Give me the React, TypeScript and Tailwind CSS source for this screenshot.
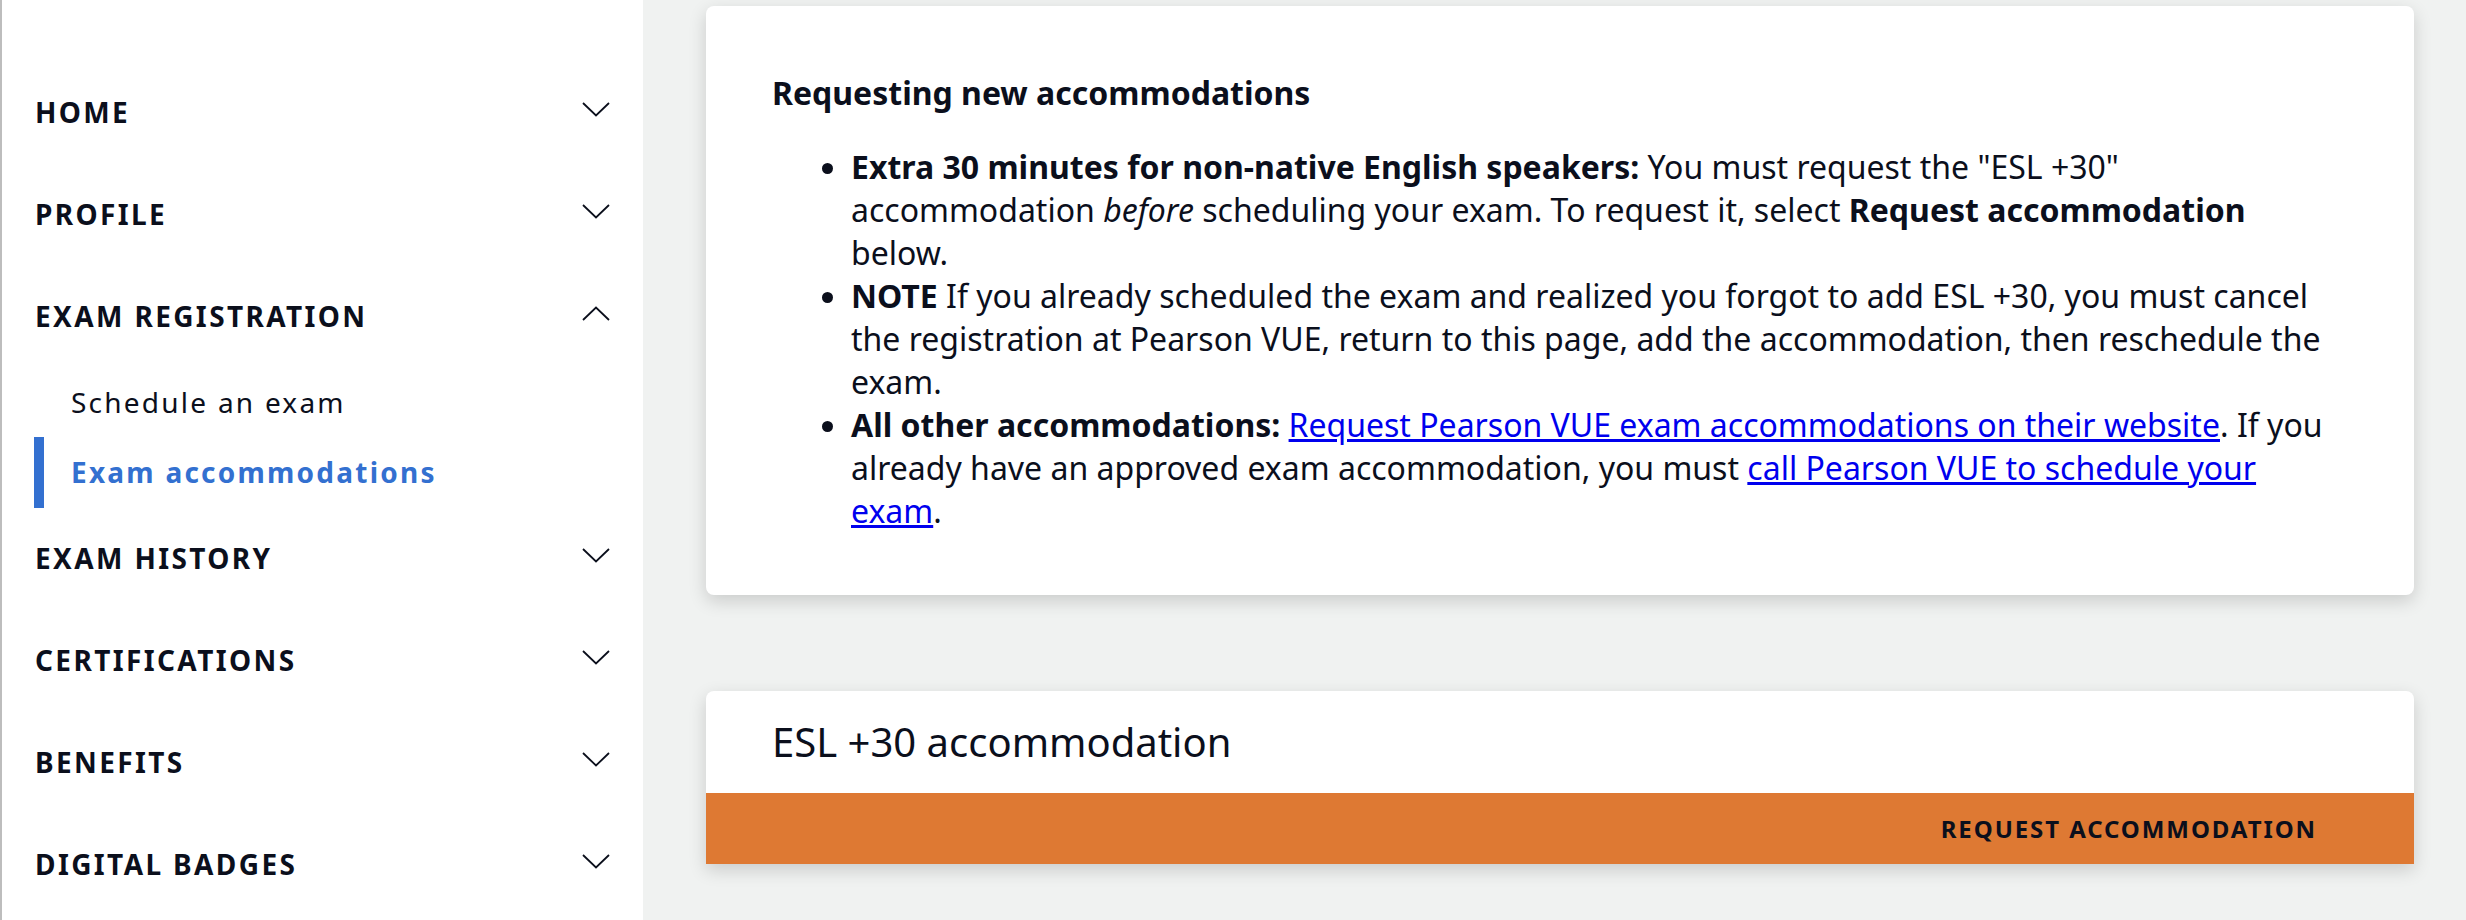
import React from "react";

const font = { fontFamily: '"Noto Sans", "Open Sans", sans-serif' };

function Chevron({ up = false }: { up?: boolean }) {
  return (
    <svg width="28" height="15" viewBox="0 0 28 15" fill="none" className="mb-[6px] shrink-0">
      <polyline
        points={up ? "1,14 14,1.5 27,14" : "1,1 14,13.5 27,1"}
        stroke="#0b0f1c"
        strokeWidth="1.8"
        strokeLinejoin="miter"
      />
    </svg>
  );
}

function NavItem({ label, up = false }: { label: string; up?: boolean }) {
  return (
    <div className="flex h-[102px] items-center justify-between pl-[33px] pr-[33px]">
      <span className="text-[28px] font-bold uppercase tracking-[0.085em] text-[#0b0f1c]">{label}</span>
      <Chevron up={up} />
    </div>
  );
}

export default function App() {
  return (
    <div className="flex h-[920px] w-full overflow-hidden bg-[#f0f2f1]" style={font}>
      <aside className="flex w-[643px] shrink-0 flex-col border-l-2 border-[#bdbdbd] bg-white pt-[61px]">
        <NavItem label="Home" />
        <NavItem label="Profile" />
        <NavItem label="Exam Registration" up />
        <div className="flex h-[70px] items-center pl-[69px] text-[28px] tracking-[0.08em] text-[#0b0f1c]">
          Schedule an exam
        </div>
        <div className="flex h-[70px] items-center">
          <div className="ml-[32px] h-[71px] w-[10px] bg-[#3370d0]" />
          <span className="pl-[27px] text-[28px] font-bold tracking-[0.08em] text-[#3370d0]">
            Exam accommodations
          </span>
        </div>
        <NavItem label="Exam History" />
        <NavItem label="Certifications" />
        <NavItem label="Benefits" />
        <NavItem label="Digital Badges" />
      </aside>

      <main className="flex flex-1 flex-col gap-[96px] pl-[63px] pr-[52px] pt-[6px]">
        <section className="rounded-[8px] bg-white pl-[66px] pr-[84px] pt-[65px] pb-[63px] text-[32px] leading-[43px] text-[#0b0f1c] shadow-[0_6px_18px_rgba(0,0,0,0.16)]">
          <h2 className="font-bold">Requesting new accommodations</h2>
          <ul className="mt-[31px] list-disc pl-[79px]">
            <li>
              <b>Extra 30 minutes for non-native English speakers:</b> You must request the "ESL +30"
              <br />
              accommodation <i>before</i> scheduling your exam. To request it, select{" "}
              <b>Request accommodation</b> below.
            </li>
            <li>
              <b>NOTE</b> If you already scheduled the exam and realized you forgot to add ESL +30, you must
              cancel the registration at Pearson VUE, return to this page, add the accommodation, then
              reschedule the exam.
            </li>
            <li>
              <b>All other accommodations:</b>{" "}
              <a href="#" className="text-[#0000ee] underline">
                Request Pearson VUE exam accommodations on their website
              </a>
              . If you already have an approved exam accommodation, you must{" "}
              <a href="#" className="text-[#0000ee] underline">
                call Pearson VUE to schedule your exam
              </a>
              .
            </li>
          </ul>
        </section>

        <section className="overflow-hidden rounded-t-[8px] bg-white shadow-[0_6px_18px_rgba(0,0,0,0.16)]">
          <div className="flex h-[102px] items-center pl-[66px] text-[40px] text-[#0b0f1c]">
            ESL +30 accommodation
          </div>
          <div className="flex h-[71px] items-center justify-end bg-[#de7933] pr-[97px]">
            <span className="text-[24px] font-bold uppercase tracking-[0.08em] text-[#0b0f1c]">
              Request accommodation
            </span>
          </div>
        </section>
      </main>
    </div>
  );
}
